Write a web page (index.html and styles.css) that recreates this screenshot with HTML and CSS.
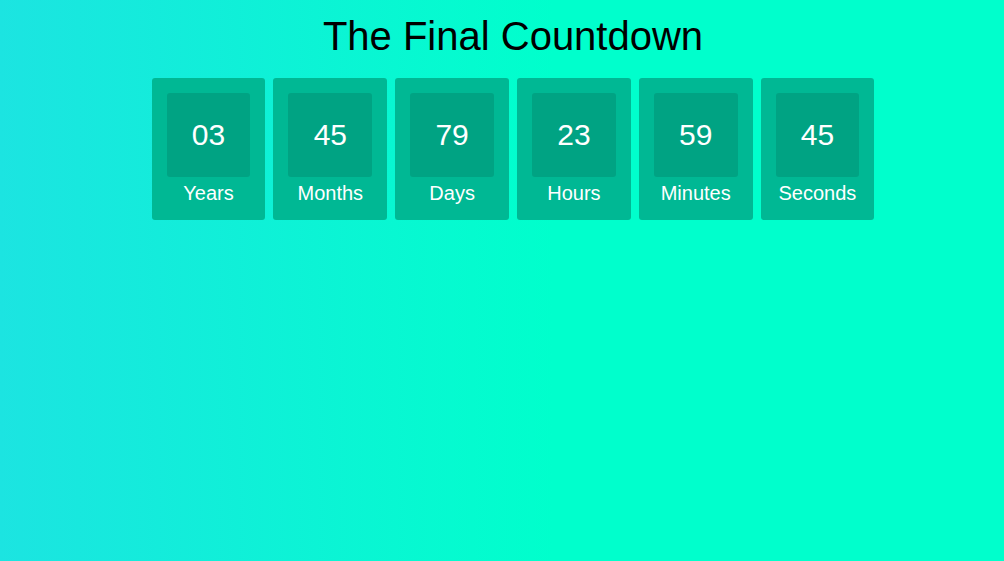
FILE: index.html
```html
<!DOCTYPE html>
<html lang="en">
<head>
<meta charset="utf-8">
<title>The Final Countdown</title>
<link rel="stylesheet" href="styles.css">
</head>
<body>
<main class="page">
  <h1 class="title">The Final Countdown</h1>
  <div class="countdown">
    <div class="unit"><div class="value">03</div><div class="label">Years</div></div>
    <div class="unit"><div class="value">45</div><div class="label">Months</div></div>
    <div class="unit"><div class="value">79</div><div class="label">Days</div></div>
    <div class="unit"><div class="value">23</div><div class="label">Hours</div></div>
    <div class="unit"><div class="value">59</div><div class="label">Minutes</div></div>
    <div class="unit"><div class="value">45</div><div class="label">Seconds</div></div>
  </div>
</main>
</body>
</html>
```

FILE: styles.css
```css
html, body {
  margin: 0;
  padding: 0;
  height: 100%;
}
body {
  background: linear-gradient(90deg, #1ce4e1 0%, #00ffcc 55%, #00ffcc 100%);
  font-family: "Liberation Sans", Arial, sans-serif;
}
.page {
  display: flex;
  flex-direction: column;
  align-items: center;
  padding: 13px 0 0 22px;
}
.title {
  margin: 0;
  font-size: 40px;
  font-weight: normal;
  line-height: 46px;
  color: #000;
}
.countdown {
  display: flex;
  gap: 8.1px;
  margin-top: 19px;
}
.unit {
  width: 113.7px;
  box-sizing: border-box;
  padding: 15px 15px 15px;
  background: #00b894;
  border-radius: 3px;
  display: flex;
  flex-direction: column;
  align-items: stretch;
}
.value {
  height: 84px;
  background: #00a383;
  border-radius: 3px;
  color: #fff;
  font-size: 30px;
  display: flex;
  align-items: center;
  justify-content: center;
}
.label {
  margin-top: 5px;
  color: #fff;
  font-size: 20px;
  line-height: 23px;
  text-align: center;
}
```
